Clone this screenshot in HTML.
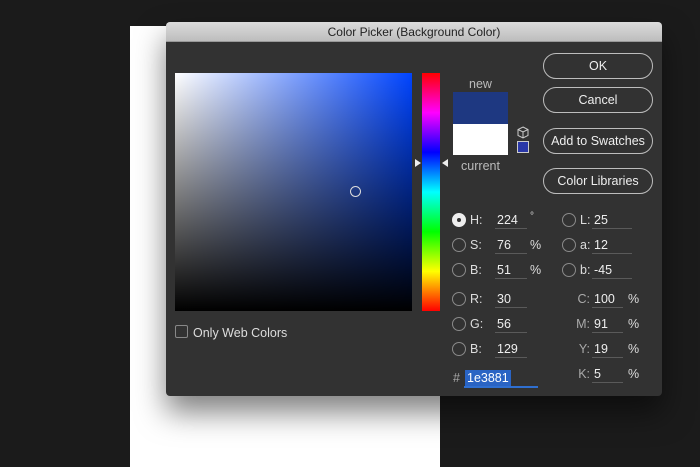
<!DOCTYPE html>
<html><head><meta charset="utf-8"><style>
*{margin:0;padding:0;box-sizing:border-box}
body{width:700px;height:467px;background:#1b1b1b;position:relative;overflow:hidden;font-family:"Liberation Sans",sans-serif;color:#dcdcdc;font-size:12px}
.a{position:absolute}
.doc{left:130px;top:26px;width:310px;height:441px;background:#fff}
.dlg{left:166px;top:22px;width:496px;height:374px;background:#323232;border-radius:4px;box-shadow:0 16px 30px rgba(0,0,0,.5)}
.title{left:0;top:0;width:496px;height:20px;background:linear-gradient(#dcdcdc,#bdbdbd);color:#222;font-size:12px;text-align:center;line-height:21px;border-bottom:1px solid #999;border-radius:4px 4px 0 0}
.btn{left:377px;width:110px;height:26px;border:1.5px solid #bdbdbd;border-radius:13px;text-align:center;line-height:25px;color:#eee;font-size:12.5px}
.rad{width:14px;height:14px;border:1.3px solid #8a8a8a;border-radius:50%}
.lbl{font-size:12.5px;color:#ddd}
.fld{border-bottom:1px solid #5a5a5a;height:17px;font-size:12.5px;color:#eee;padding-left:2px;line-height:16px}
</style></head><body>
<div class="a doc"></div>
<div class="a dlg">
 <div class="a title">Color Picker (Background Color)</div>
 <div class="a" style="left:9px;top:51px;width:237px;height:238px;background:linear-gradient(to top,#000,rgba(0,0,0,0)),linear-gradient(to right,#fff,#0044ff)"></div>
 <div class="a" style="left:184px;top:164px;width:11px;height:11px;border:1.2px solid #ddd;border-radius:50%"></div>
 <div class="a" style="left:256px;top:51px;width:18px;height:238px;background:linear-gradient(#ff0000,#ff00ff 16.7%,#0000ff 33.3%,#00ffff 50%,#00ff00 66.7%,#ffff00 83.3%,#ff0000)"></div>
 <div class="a" style="left:249px;top:137px;width:0;height:0;border-left:6px solid #eee;border-top:4px solid transparent;border-bottom:4px solid transparent"></div>
 <div class="a" style="left:276px;top:137px;width:0;height:0;border-right:6px solid #eee;border-top:4px solid transparent;border-bottom:4px solid transparent"></div>
 <div class="a lbl" style="left:287px;top:55px;width:55px;text-align:center;color:#bbb">new</div>
 <div class="a" style="left:287px;top:70px;width:55px;height:32px;background:#1e3881"></div>
 <div class="a" style="left:287px;top:102px;width:55px;height:31px;background:#fff"></div>
 <div class="a lbl" style="left:283px;top:137px;width:63px;text-align:center;color:#bbb">current</div>
 <svg class="a" style="left:351px;top:104px" width="12" height="13" viewBox="0 0 12 13"><path d="M6 1L11 3.5V9.5L6 12L1 9.5V3.5Z M1 3.5L6 6L11 3.5 M6 6V12" fill="none" stroke="#ccc" stroke-width="1"/></svg>
 <div class="a" style="left:351px;top:119px;width:12px;height:12px;background:#2a38a8;border:1px solid #ccc"></div>
 <div class="a btn" style="top:31px">OK</div>
 <div class="a btn" style="top:65px">Cancel</div>
 <div class="a btn" style="top:106px">Add to Swatches</div>
 <div class="a btn" style="top:146px">Color Libraries</div>
 <div class="a" style="left:9px;top:303px;width:13px;height:13px;border:1px solid #888;border-radius:2px"></div>
 <div class="a lbl" style="left:27px;top:304px">Only Web Colors</div>

 <div class="a rad" style="left:286px;top:191px;background:#eee;border-color:#eee"></div>
 <div class="a" style="left:291px;top:196px;width:4px;height:4px;border-radius:50%;background:#333"></div>
 <div class="a lbl" style="left:304px;top:191px">H:</div><div class="a fld" style="left:329px;top:190px;width:32px">224</div><div class="a lbl" style="left:364px;top:189px;font-size:10px">°</div>
 <div class="a rad" style="left:286px;top:216px"></div><div class="a lbl" style="left:304px;top:216px">S:</div><div class="a fld" style="left:329px;top:215px;width:32px">76</div><div class="a lbl" style="left:364px;top:216px">%</div>
 <div class="a rad" style="left:286px;top:241px"></div><div class="a lbl" style="left:304px;top:241px">B:</div><div class="a fld" style="left:329px;top:240px;width:32px">51</div><div class="a lbl" style="left:364px;top:241px">%</div>
 <div class="a rad" style="left:286px;top:270px"></div><div class="a lbl" style="left:304px;top:270px">R:</div><div class="a fld" style="left:329px;top:269px;width:32px">30</div>
 <div class="a rad" style="left:286px;top:295px"></div><div class="a lbl" style="left:304px;top:295px">G:</div><div class="a fld" style="left:329px;top:294px;width:32px">56</div>
 <div class="a rad" style="left:286px;top:320px"></div><div class="a lbl" style="left:304px;top:320px">B:</div><div class="a fld" style="left:329px;top:319px;width:32px">129</div>
 <div class="a lbl" style="left:287px;top:349px;color:#aaa">#</div>
 <div class="a" style="left:298px;top:347px;width:74px;height:19px;border-bottom:2px solid #2f6fd0"></div>
 <div class="a" style="left:299px;top:348px;height:16px;padding:0 2px;background:#2a64c4;color:#fff;font-size:12.5px;line-height:16px">1e3881</div>

 <div class="a rad" style="left:396px;top:191px"></div><div class="a lbl" style="left:414px;top:191px">L:</div><div class="a fld" style="left:426px;top:190px;width:40px">25</div>
 <div class="a rad" style="left:396px;top:216px"></div><div class="a lbl" style="left:414px;top:216px">a:</div><div class="a fld" style="left:426px;top:215px;width:40px">12</div>
 <div class="a rad" style="left:396px;top:241px"></div><div class="a lbl" style="left:414px;top:241px">b:</div><div class="a fld" style="left:426px;top:240px;width:40px">-45</div>
 <div class="a lbl" style="left:400px;top:270px;width:24px;text-align:right;color:#aaa">C:</div><div class="a fld" style="left:426px;top:269px;width:31px">100</div><div class="a lbl" style="left:462px;top:270px">%</div>
 <div class="a lbl" style="left:400px;top:295px;width:24px;text-align:right;color:#aaa">M:</div><div class="a fld" style="left:426px;top:294px;width:31px">91</div><div class="a lbl" style="left:462px;top:295px">%</div>
 <div class="a lbl" style="left:400px;top:320px;width:24px;text-align:right;color:#aaa">Y:</div><div class="a fld" style="left:426px;top:319px;width:31px">19</div><div class="a lbl" style="left:462px;top:320px">%</div>
 <div class="a lbl" style="left:400px;top:345px;width:24px;text-align:right;color:#aaa">K:</div><div class="a fld" style="left:426px;top:344px;width:31px">5</div><div class="a lbl" style="left:462px;top:345px">%</div>
</div>
</body></html>
